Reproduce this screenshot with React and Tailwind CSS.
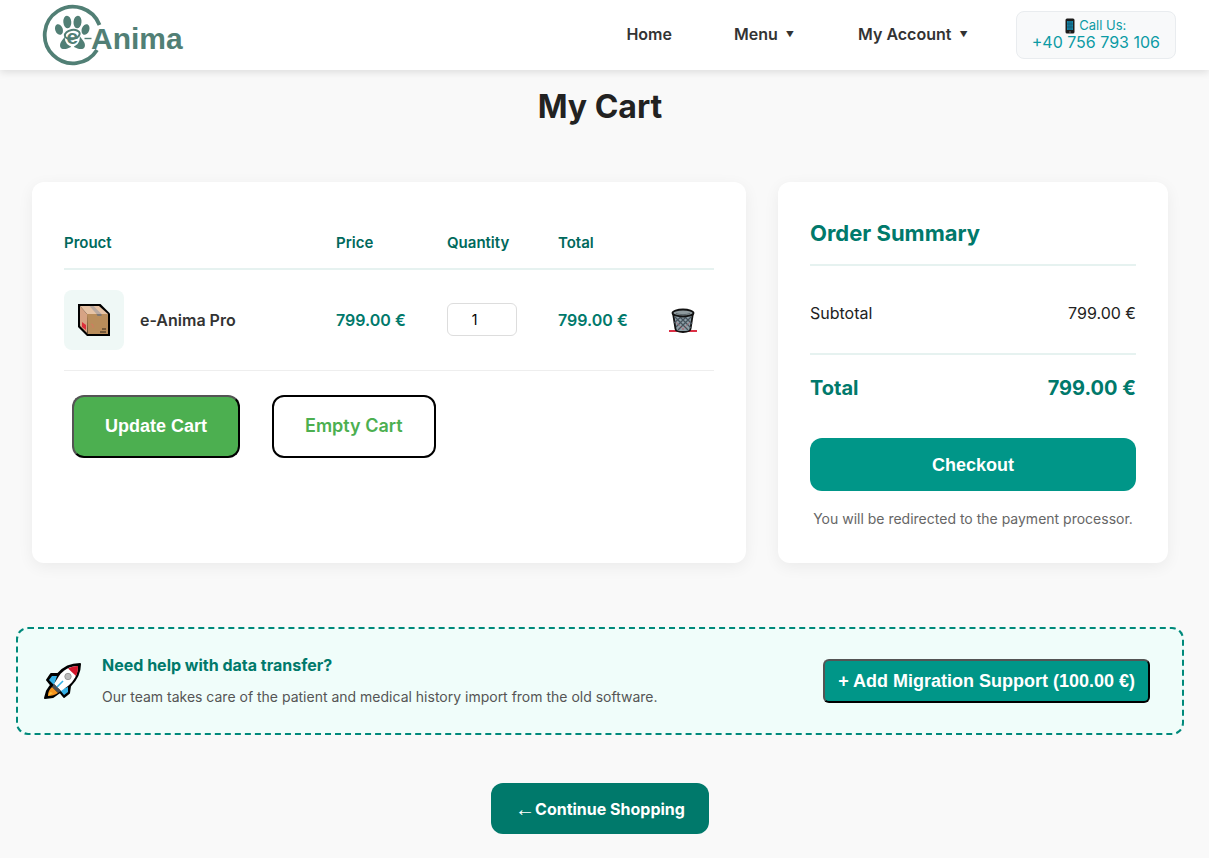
import { useState } from "react";

function Logo() {
  return (
    <svg width="146" height="64" viewBox="0 0 146 64" role="img" aria-label="e-Anima">
      <path
        d="M59.500 22A28.300 28.300 0 1 0 57 47"
        fill="none"
        stroke="#517f75"
        strokeWidth="3.800"
      />
      <g fill="#517f75">
        <ellipse cx="19" cy="26.500" rx="3.800" ry="5.500" transform="rotate(-20 19 26.500)" />
        <ellipse cx="27.300" cy="19" rx="4" ry="6.300" transform="rotate(-5 27.300 19)" />
        <ellipse cx="37.500" cy="19" rx="4" ry="6.300" transform="rotate(5 37.500 19)" />
        <ellipse cx="45.500" cy="26.500" rx="3.800" ry="5.500" transform="rotate(20 45.500 26.500)" />
        <path d="M26 32c-2 3-3.500 4.500-5 7-1.500 2.500-1.500 6.500 2 7 3 .3 5-.5 8-2z" />
        <path d="M39 32c2 3 3.500 4.500 5 7 1.500 2.500 1.500 6.500-2 7-3 .3-5-.5-8-2z" />
      </g>
      <ellipse cx="32.300" cy="35" rx="7.500" ry="8.500" fill="#fff" />
      <ellipse
        cx="32.300"
        cy="31.500"
        rx="7.500"
        ry="4.500"
        fill="none"
        stroke="#517f75"
        strokeWidth="2"
        transform="rotate(-10 32.300 31.500)"
      />
      <text x="26.500" y="41" fontSize="21" fontWeight="700" fill="#517f75" fontFamily="Liberation Sans, sans-serif">
        e
      </text>
      <path d="M44.500 35.500h7" stroke="#517f75" strokeWidth="1.400" />
      <text x="51" y="46" fontSize="30" fontWeight="700" fill="#517f75" fontFamily="Liberation Sans, sans-serif">
        Anima
      </text>
    </svg>
  );
}

function PhoneIcon() {
  return (
    <svg width="10" height="16" viewBox="0 0 10 16" aria-hidden="true">
      <rect x="0.500" y="0.500" width="9" height="15" rx="1.500" fill="#1b1b1b" />
      <rect x="2" y="3" width="6" height="9" fill="#1686a8" />
      <path d="M2 6h6M2 9h6M4 3v9M6 3v9" stroke="#0d4c66" strokeWidth="0.600" />
      <path d="M4 14h2" stroke="#777" />
    </svg>
  );
}

function BoxIcon() {
  return (
    <svg width="34" height="34" viewBox="0 0 34 34" aria-hidden="true">
      <path d="M1 1h22.500L33 10.500V33H10L1 24z" fill="#000" />
      <path d="M3 3l7 8v19l-7-7z" fill="#d6a384" />
      <path d="M3 3h19l9 8H10z" fill="#e6c3a5" />
      <path d="M10 11h21v20H10.500z" fill="#b98d5b" />
      <path d="M12.500 3h4l8 8h-5z" fill="#b9a9a0" />
      <path d="M19.500 11h5v2h-4z" fill="#7d7774" />
      <path d="M5 19l4 3v5l-4-3z" fill="#dc2f3c" />
      <path d="M14 21l2 1v3" stroke="#d47a60" fill="none" />
      <path d="M25 26h4M23 29h6" stroke="#33261a" strokeWidth="1.200" />
    </svg>
  );
}

function TrashIcon() {
  return (
    <svg width="28" height="26" viewBox="0 0 28 26" aria-hidden="true">
      <path d="M0 24h28" stroke="#dc2f45" strokeWidth="2" />
      <path d="M4 6l2.500 16c.5 4 14.500 4 15 0L24 6z" fill="#8fa0a8" stroke="#111" strokeWidth="1.800" />
      <path
        d="M6 10l13 13M10 9l12 12M15 9l8 8M22 10L9 23M18 9L7 20M13 9l-8 7"
        stroke="#46525c"
        strokeWidth="1.200"
      />
      <path d="M7 15l8 8M21 15l-8 8" stroke="#b0606c" strokeWidth="0.600" />
      <ellipse cx="14" cy="6" rx="10.500" ry="3.500" fill="#8f9a9e" stroke="#111" strokeWidth="1.800" />
      <path d="M7 6.500c4 1.500 10 1.500 14 0" stroke="#5c676c" fill="none" />
    </svg>
  );
}

function RocketIcon() {
  return (
    <svg width="38" height="38" viewBox="0 0 38 38" aria-hidden="true">
      <path
        d="M36 2C27 2 19 6 14 12L7 12 3 18l4 5-4 6-2 7 8-1 7-5 4 5 5-4 1-7C32 18 36 10 36 2z"
        fill="#000"
        stroke="#000"
        strokeWidth="2"
        strokeLinejoin="round"
      />
      <path d="M13 14H8l-3 4 5 5zM24 25v5l-4 3-4-5z" fill="#35b1e6" />
      <path d="M34 4c-8 0-15 4-19 10l-5 8 7 7 7-5c6-5 10-12 10-20z" fill="#fff" />
      <path d="M34 4c-4 0-7 1-10 2.500L32 14c1.500-3 2-6 2-10z" fill="#d3162b" />
      <circle cx="24" cy="14.500" r="3.200" fill="#bbb" stroke="#999" />
      <path d="M10 22l7 7-3 2-6-6z" fill="#4a5057" />
      <path d="M8 25l6 6c-3 2-6 3-10 3 0-4 1-6 4-9z" fill="#f7941d" />
      <path d="M6 30l3 1-5 3z" fill="#ffc23d" />
      <path d="M13 25l6-6" stroke="#35b1e6" strokeWidth="1.600" />
    </svg>
  );
}

function Arrow() {
  return <span className="text-[8px]">▼</span>;
}

export default function App() {
  const [quantity, setQuantity] = useState(1);

  return (
    <div className="min-h-screen bg-[#f9f9f9] pb-6 font-[Inter,sans-serif] text-[#222]">
      {/* Header */}
      <header className="bg-white shadow-[0_2px_8px_rgba(0,0,0,0.12)]">
        <div className="flex h-[70px] items-center justify-between pl-10 pr-[33px]">
          <a href="#home">
            <Logo />
          </a>
          <nav className="flex items-center font-semibold text-[#333]">
            <a href="#home" className="mr-[62px] pb-0.5">Home</a>
            <a href="#menu" className="mr-16 flex items-center gap-2 pb-0.5">
              Menu <Arrow />
            </a>
            <a href="#account" className="mr-12 flex items-center gap-2 pb-0.5">
              My Account <Arrow />
            </a>
            <a
              href="tel:+40756793106"
              className="flex h-12 flex-col items-center justify-center rounded-lg border border-[#e9ecef] bg-[#f8f9fa] px-[15px] pb-0.5 font-normal leading-[17px] text-[#0c9ba5]"
            >
              <span className="flex items-center gap-1 text-[13px] leading-[17px]">
                <PhoneIcon /> Call Us:
              </span>
              <span>+40 756 793 106</span>
            </a>
          </nav>
        </div>
      </header>

      <main className="pr-[9px]">
        <h1 className="pt-4 text-center text-[32px] font-bold leading-[42px]">My Cart</h1>

        {/* Cart and summary */}
        <div className="mx-8 mt-[54px] flex gap-8">
          <section className="flex-1 rounded-xl bg-white p-8 shadow-[0_4px_16px_rgba(0,0,0,0.06)]">
            <table className="w-full table-fixed text-left">
              <thead>
                <tr className="h-[55px] border-b-2 border-[#e6f2f0] text-[15px] text-[#00695c]">
                  <th className="pt-1 font-semibold">Prouct</th>
                  <th className="w-[111px] pt-1 font-semibold">Price</th>
                  <th className="w-[111px] pt-1 font-semibold">Quantity</th>
                  <th className="w-[111px] pt-1 font-semibold">Total</th>
                  <th className="w-[45px]"></th>
                </tr>
              </thead>
              <tbody>
                <tr className="h-[101px] border-b border-[#eee] font-semibold text-[#00796b]">
                  <td>
                    <div className="flex items-center gap-4 text-[#333]">
                      <span className="flex size-[60px] items-center justify-center rounded-lg bg-[#eff8f6]">
                        <BoxIcon />
                      </span>
                      e-Anima Pro
                    </div>
                  </td>
                  <td>799.00 €</td>
                  <td>
                    <input
                      type="number"
                      min="1"
                      aria-label="Quantity"
                      value={quantity}
                      onChange={(e) => setQuantity(e.target.value)}
                      className="block h-[33px] w-[70px] rounded-md border border-[#ddd] px-2 text-center text-sm font-normal text-black"
                    />
                  </td>
                  <td>799.00 €</td>
                  <td>
                    <button type="button" aria-label="Remove" className="block">
                      <TrashIcon />
                    </button>
                  </td>
                </tr>
              </tbody>
            </table>

            <div className="ml-2 mt-6 flex gap-8">
              <button
                type="button"
                className="h-[63px] rounded-xl border-2 border-black bg-[#4caf50] px-[31px] font-['Liberation_Sans',sans-serif] text-lg font-bold text-white [border-style:outset]"
              >
                Update Cart
              </button>
              <button
                type="button"
                className="h-[63px] rounded-xl border-2 border-black bg-white px-[31px] text-lg font-semibold text-[#4caf50]"
              >
                Empty Cart
              </button>
            </div>
          </section>

          <aside className="w-[390px] rounded-xl bg-white p-8 shadow-[0_4px_16px_rgba(0,0,0,0.06)]">
            <h2 className="border-b-2 border-[#e6f2f0] pb-4 pt-1 text-[22px] font-bold leading-[30px] text-[#00796b]">
              Order Summary
            </h2>
            <div className="flex h-[87px] items-center justify-between pt-1.5">
              <span>Subtotal</span>
              <span>799.00 €</span>
            </div>
            <div className="flex h-[69px] items-center justify-between border-t-2 border-[#e6f2f0] pb-0.5 text-xl font-bold text-[#00796b]">
              <span>Total</span>
              <span>799.00 €</span>
            </div>
            <button
              type="button"
              className="mt-4 h-[53px] w-full rounded-xl bg-[#009688] font-['Liberation_Sans',sans-serif] text-lg font-bold text-white"
            >
              Checkout
            </button>
            <p className="mt-4 text-center text-sm leading-6 text-[#666]">
              You will be redirected to the payment processor.
            </p>
          </aside>
        </div>

        {/* Migration support */}
        <section className="mx-4 mt-16 flex h-[108px] items-center rounded-xl border-2 border-dashed border-[#00897b] bg-[#f0fdfa] pl-[26px] pr-8">
          <RocketIcon />
          <div className="ml-5 flex-1">
            <h3 className="font-bold leading-6 text-[#00796b]">Need help with data transfer?</h3>
            <p className="mt-2 text-sm leading-6 text-[#555]">
              Our team takes care of the patient and medical history import from the old software.
            </p>
          </div>
          <button
            type="button"
            className="h-11 rounded-md border-2 border-black bg-[#009688] px-[13px] font-['Liberation_Sans',sans-serif] text-lg font-bold text-white [border-style:outset]"
          >
            + Add Migration Support (100.00 €)
          </button>
        </section>

        <div className="mt-12 flex justify-center">
          <a
            href="#shop"
            className="flex h-[51px] items-center rounded-xl bg-[#00796b] px-6 font-bold text-white"
          >
            <span className="font-['Liberation_Sans',sans-serif] text-xl font-normal">←</span>
            Continue Shopping
          </a>
        </div>
      </main>
    </div>
  );
}
